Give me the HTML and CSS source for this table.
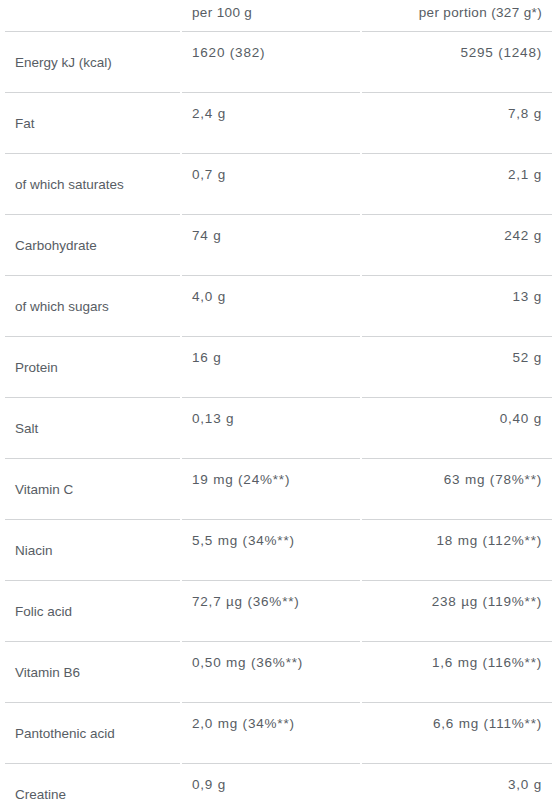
FILE: index.html
```html
<!DOCTYPE html>
<html lang="en">
<head>
<meta charset="utf-8">
<link rel="stylesheet" href="styles.css">
</head>
<body>
<table class="nutrition">
  <colgroup>
    <col class="col-label">
    <col class="col-100">
    <col class="col-portion">
  </colgroup>
  <thead>
    <tr>
      <th class="label"></th>
      <th class="val">per 100 g</th>
      <th class="val right">per portion (327 g*)</th>
    </tr>
  </thead>
  <tbody>
    <tr><td class="label">Energy kJ (kcal)</td><td class="val">1620 (382)</td><td class="val right">5295 (1248)</td></tr>
    <tr><td class="label">Fat</td><td class="val">2,4 g</td><td class="val right">7,8 g</td></tr>
    <tr><td class="label">of which saturates</td><td class="val">0,7 g</td><td class="val right">2,1 g</td></tr>
    <tr><td class="label">Carbohydrate</td><td class="val">74 g</td><td class="val right">242 g</td></tr>
    <tr><td class="label">of which sugars</td><td class="val">4,0 g</td><td class="val right">13 g</td></tr>
    <tr><td class="label">Protein</td><td class="val">16 g</td><td class="val right">52 g</td></tr>
    <tr><td class="label">Salt</td><td class="val">0,13 g</td><td class="val right">0,40 g</td></tr>
    <tr><td class="label">Vitamin C</td><td class="val">19 mg (24%**)</td><td class="val right">63 mg (78%**)</td></tr>
    <tr><td class="label">Niacin</td><td class="val">5,5 mg (34%**)</td><td class="val right">18 mg (112%**)</td></tr>
    <tr><td class="label">Folic acid</td><td class="val">72,7 µg (36%**)</td><td class="val right">238 µg (119%**)</td></tr>
    <tr><td class="label">Vitamin B6</td><td class="val">0,50 mg (36%**)</td><td class="val right">1,6 mg (116%**)</td></tr>
    <tr><td class="label">Pantothenic acid</td><td class="val">2,0 mg (34%**)</td><td class="val right">6,6 mg (111%**)</td></tr>
    <tr><td class="label">Creatine</td><td class="val">0,9 g</td><td class="val right">3,0 g</td></tr>
  </tbody>
</table>
</body>
</html>
```
FILE: styles.css
```css
html, body {
  margin: 0;
  padding: 0;
  background: #ffffff;
}

body {
  font-family: "Liberation Sans", Arial, sans-serif;
  font-size: 13.5px;
  line-height: 16px;
  color: #575d64;
}

.nutrition {
  margin-left: 3px;
  width: 549px;
  border-collapse: separate;
  border-spacing: 2px 0;
  table-layout: fixed;
}

.col-label { width: 175px; }
.col-100 { width: 178px; }
.col-portion { width: 190px; }

.nutrition th,
.nutrition td {
  border-bottom: 1px solid #d3d5d7;
  padding: 0 10px;
  font-weight: normal;
  text-align: left;
  white-space: nowrap;
}

.nutrition th {
  padding-top: 5px;
  vertical-align: top;
  box-sizing: border-box;
  height: 32px;
  letter-spacing: 0.35px;
}

.nutrition td {
  height: 61px;
  box-sizing: border-box;
}

.nutrition td.label {
  vertical-align: middle;
  padding-top: 2px;
}

.nutrition td.val {
  vertical-align: top;
  padding-top: 13px;
  letter-spacing: 0.8px;
}

.nutrition .right {
  text-align: right;
  padding-right: 10px;
}
```
